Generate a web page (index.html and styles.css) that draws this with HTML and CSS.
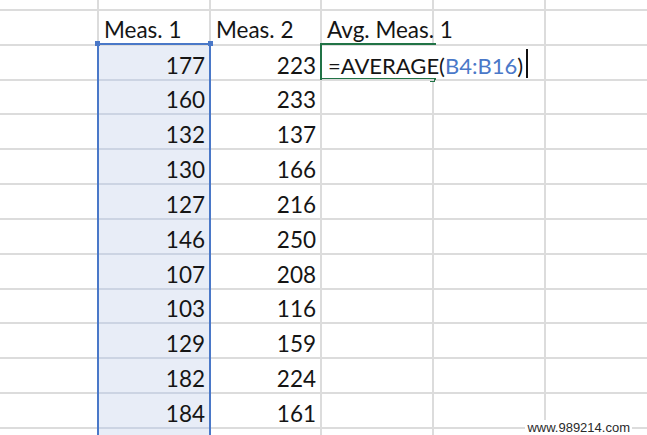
FILE: index.html
```html
<!DOCTYPE html>
<html>
<head>
<meta charset="utf-8">
<link rel="stylesheet" href="styles.css">
</head>
<body>
<div class="wrap">
  <div class="sheet">
    <div class="c"></div><div class="c"></div><div class="c"></div><div class="c"></div><div class="c"></div><div class="c"></div>

    <div class="c"></div><div class="c txt head">Meas. 1</div><div class="c txt head">Meas. 2</div><div class="c txt head">Avg. Meas. 1</div><div class="c"></div><div class="c"></div>

    <div class="c"></div><div class="c num sel">177</div><div class="c num">223</div><div class="c txt edit">=AVERAGE(<span class="ref">B4:B16</span>)<span class="caret"></span></div><div class="c"></div><div class="c"></div>
    <div class="c"></div><div class="c num sel">160</div><div class="c num">233</div><div class="c"></div><div class="c"></div><div class="c"></div>
    <div class="c"></div><div class="c num sel">132</div><div class="c num">137</div><div class="c"></div><div class="c"></div><div class="c"></div>
    <div class="c"></div><div class="c num sel">130</div><div class="c num">166</div><div class="c"></div><div class="c"></div><div class="c"></div>
    <div class="c"></div><div class="c num sel">127</div><div class="c num">216</div><div class="c"></div><div class="c"></div><div class="c"></div>
    <div class="c"></div><div class="c num sel">146</div><div class="c num">250</div><div class="c"></div><div class="c"></div><div class="c"></div>
    <div class="c"></div><div class="c num sel">107</div><div class="c num">208</div><div class="c"></div><div class="c"></div><div class="c"></div>
    <div class="c"></div><div class="c num sel">103</div><div class="c num">116</div><div class="c"></div><div class="c"></div><div class="c"></div>
    <div class="c"></div><div class="c num sel">129</div><div class="c num">159</div><div class="c"></div><div class="c"></div><div class="c"></div>
    <div class="c"></div><div class="c num sel">182</div><div class="c num">224</div><div class="c"></div><div class="c"></div><div class="c"></div>
    <div class="c"></div><div class="c num sel">184</div><div class="c num">161</div><div class="c"></div><div class="c"></div><div class="c"></div>
    <div class="c"></div><div class="c num sel"></div><div class="c num"></div><div class="c"></div><div class="c"></div><div class="c"></div>
  </div>

  <div class="selection">
    <span class="handle h-left"></span>
    <span class="handle h-right"></span>
  </div>
  <div class="active">
    <span class="fill-handle"></span>
  </div>
  <div class="watermark">www.989214.com</div>
</div>
</body>
</html>
```
FILE: styles.css
```css
html, body {
  margin: 0;
  padding: 0;
  background: #ffffff;
}

.wrap {
  position: relative;
  width: 647px;
  height: 435px;
  overflow: hidden;
  font-family: Lato, "Open Sans", sans-serif;
  font-size: 22.5px;
  color: #151515;
}

.sheet {
  display: grid;
  grid-template-columns: 99px 112px 111px 112px 112px 1fr;
  grid-template-rows: 11px repeat(12, 34.83px) 40px;
}

.c {
  box-sizing: border-box;
  border-right: 2px solid #dcdcdc;
  border-bottom: 2px solid #dcdcdc;
  display: flex;
  align-items: flex-end;
  padding: 0 4px 1px 5px;
  line-height: 24px;
  white-space: nowrap;
  min-width: 0;
}

.c:nth-child(6n) {
  border-right: none;
}

.head {
  padding-bottom: 2px;
}

.num {
  justify-content: flex-end;
}

.txt {
  justify-content: flex-start;
}

.sel {
  background: #e8edf7;
  border-bottom-color: #ccd4e3;
}

.edit {
  border-right: none;
  overflow: visible;
  position: relative;
  z-index: 2;
  padding-left: 6px;
  font-size: 22px;
}

.ref {
  color: #4a78c8;
}

.caret {
  flex-shrink: 0;
  display: block;
  width: 2px;
  height: 29px;
  background: #111;
  margin-left: 3px;
}

.selection {
  position: absolute;
  left: 97px;
  top: 43px;
  width: 114px;
  height: 420px;
  box-sizing: border-box;
  border: 2px solid #4a78c8;
}

.handle {
  position: absolute;
  top: -4px;
  width: 5px;
  height: 5px;
  background: #4a78c8;
}

.h-left { left: -4px; }
.h-right { right: -4px; }

.active {
  position: absolute;
  left: 320px;
  top: 43px;
  width: 116px;
  height: 37px;
  box-sizing: border-box;
  border: 2px solid #217346;
  border-right: none;
}

.fill-handle {
  position: absolute;
  right: 1px;
  bottom: -4px;
  width: 5px;
  height: 4px;
  background: #217346;
}

.watermark {
  position: absolute;
  right: 15px;
  top: 420px;
  padding: 0 2px;
  background: #ffffff;
  font-family: "Liberation Sans", Arial, sans-serif;
  font-size: 13px;
  line-height: 15px;
  color: #2a2a2a;
  z-index: 3;
}
```
